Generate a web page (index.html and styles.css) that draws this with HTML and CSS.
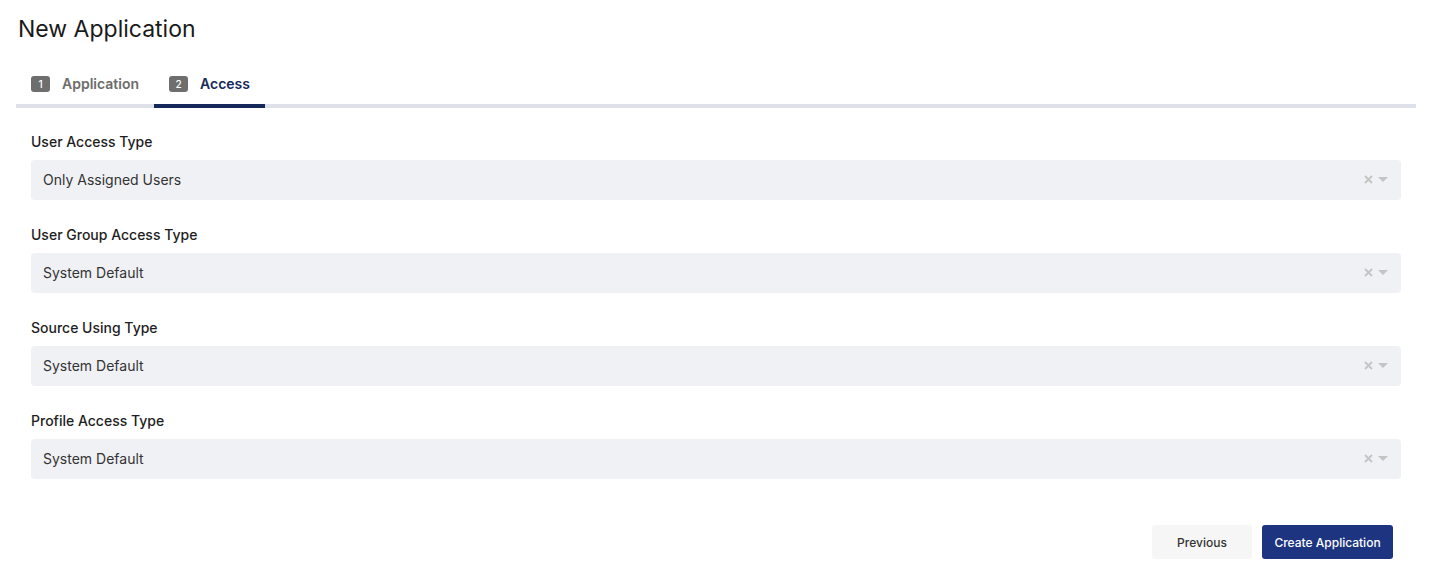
FILE: index.html
```html
<!DOCTYPE html>
<html lang="en">
<head>
  <meta charset="UTF-8">
  <title>New Application</title>
  <link rel="stylesheet" href="styles.css">
</head>
<body>

<div class="page">
  <h1 class="title">New Application</h1>

  <div class="tabs">
    <div class="tab"><span class="badge">1</span>Application</div>
    <div class="tab active"><span class="badge">2</span>Access</div>
  </div>

  <div class="form">
    <div class="field">
      <label>User Access Type</label>
      <div class="select">
        <span>Only Assigned Users</span>
        <span class="controls">
          <svg class="clear" width="9" height="9" viewBox="0 0 9 9"><path d="M1 1L8 8M8 1L1 8"/></svg>
          <span class="caret"></span>
        </span>
      </div>
    </div>
    <div class="field">
      <label>User Group Access Type</label>
      <div class="select">
        <span>System Default</span>
        <span class="controls">
          <svg class="clear" width="9" height="9" viewBox="0 0 9 9"><path d="M1 1L8 8M8 1L1 8"/></svg>
          <span class="caret"></span>
        </span>
      </div>
    </div>
    <div class="field">
      <label>Source Using Type</label>
      <div class="select">
        <span>System Default</span>
        <span class="controls">
          <svg class="clear" width="9" height="9" viewBox="0 0 9 9"><path d="M1 1L8 8M8 1L1 8"/></svg>
          <span class="caret"></span>
        </span>
      </div>
    </div>
    <div class="field">
      <label>Profile Access Type</label>
      <div class="select">
        <span>System Default</span>
        <span class="controls">
          <svg class="clear" width="9" height="9" viewBox="0 0 9 9"><path d="M1 1L8 8M8 1L1 8"/></svg>
          <span class="caret"></span>
        </span>
      </div>
    </div>
  </div>

  <div class="actions">
    <button class="btn btn-light">Previous</button>
    <button class="btn btn-primary">Create Application</button>
  </div>
</div>

</body>
</html>
```

FILE: styles.css
```css
body {
  margin: 0;
  font-family: Inter, "Noto Sans", sans-serif;
  background: #fff;
  color: #222;
}

.page {
  padding: 0 14px 0 16px;
}

.title {
  margin: 0;
  padding: 15px 0 0 2px;
  font-size: 23px;
  font-weight: 400;
  line-height: 29px;
  color: #1a1a1a;
}

.tabs {
  display: flex;
  margin-top: 31px;
  border-bottom: 4px solid #dfe1ea;
}

.tab {
  display: flex;
  align-items: center;
  padding: 0 15px 12px 15px;
  margin-bottom: -4px;
  border-bottom: 4px solid transparent;
  font-size: 14px;
  font-weight: 600;
  color: #6c6c6c;
}

.tab.active {
  color: #14285a;
  border-bottom-color: #14285a;
}

.badge {
  display: inline-flex;
  align-items: center;
  justify-content: center;
  width: 19px;
  height: 16px;
  margin-right: 12px;
  border-radius: 3px;
  background: #6e6e6e;
  color: #fff;
  font-size: 10px;
  font-weight: 500;
}

.form {
  padding: 25px 15px 0 15px;
}

.field {
  margin-bottom: 26px;
}

.field label {
  display: block;
  font-size: 14px;
  font-weight: 500;
  line-height: 17px;
  margin-bottom: 10px;
  color: #1e1e1e;
}

.select {
  display: flex;
  align-items: center;
  justify-content: space-between;
  height: 40px;
  padding: 0 12px 1px 12px;
  box-sizing: border-box;
  border-radius: 4px;
  background: #f0f1f5;
  font-size: 14px;
  color: #333;
}

.controls {
  display: flex;
  align-items: center;
  gap: 5px;
  margin-right: 1px;
}

.clear {
  stroke: #c4c4c4;
  stroke-width: 1.8;
}

.caret {
  width: 0;
  height: 0;
  border-left: 5px solid transparent;
  border-right: 5px solid transparent;
  border-top: 5px solid #c4c4c4;
}

.actions {
  display: flex;
  justify-content: flex-end;
  gap: 10px;
  padding: 20px 23px 0 0;
}

.btn {
  height: 34px;
  padding: 0 12px;
  border: none;
  border-radius: 3px;
  font-family: Inter, "Noto Sans", sans-serif;
  font-size: 12px;
  font-weight: 500;
  cursor: pointer;
}

.btn-light {
  width: 100px;
  background: #f6f6f6;
  color: #333;
}

.btn-primary {
  width: 131px;
  background: #1d3580;
  color: #fff;
}
```
